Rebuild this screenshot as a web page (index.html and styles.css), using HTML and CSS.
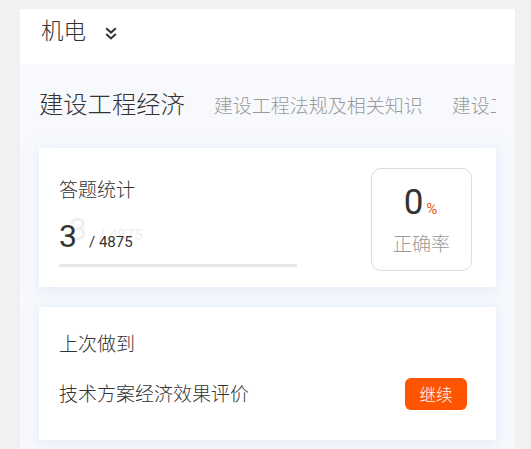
FILE: index.html
```html
<!DOCTYPE html>
<html lang="zh">
<head>
<meta charset="utf-8">
<link rel="stylesheet" href="styles.css">
</head>
<body>
<div class="page">
  <div class="header">
    <span class="major">机电</span>
    <svg class="chev" width="12" height="13" viewBox="0 0 12 13"><polyline points="1.2,1.2 6,5.6 10.8,1.2" fill="none" stroke="#333" stroke-width="2"/><polyline points="1.2,7 6,11.4 10.8,7" fill="none" stroke="#333" stroke-width="2"/></svg>
  </div>
  <div class="main">
    <div class="tabs">
      <span class="tab active">建设工程经济</span>
      <span class="tab">建设工程法规及相关知识</span>
      <span class="tab">建设工程项目管理</span>
    </div>
    <div class="card stats">
      <div class="stats-left">
        <div class="label">答题统计</div>
        <div class="count"><span class="done">3</span><span class="total">/ 4875</span></div>
        <div class="bar"></div>
      </div>
      <div class="rate">
        <div class="rate-num"><span class="pct">0</span><span class="sign">%</span></div>
        <div class="rate-label">正确率</div>
      </div>
    </div>
    <div class="card last">
      <div class="label">上次做到</div>
      <div class="last-row">
        <span class="chapter">技术方案经济效果评价</span>
        <button class="btn">继续</button>
      </div>
    </div>
  </div>
</div>
</body>
</html>
```
FILE: styles.css
```css
* { box-sizing: border-box; }
html, body { margin: 0; padding: 0; }
body {
  background: #f1f1f1;
  font-family: Roboto, "Noto Sans CJK SC", sans-serif;
  font-weight: 300;
  color: #333;
  width: 531px;
  height: 449px;
  overflow: hidden;
}
.page {
  margin: 9px 0 0 20px;
  width: 495px;
}
.header {
  height: 55px;
  background: #fff;
  display: flex;
  align-items: center;
  padding: 0 0 12px 21px;
}
.major {
  font-size: 22.5px;
  line-height: 22px;
}
.chev {
  margin-left: 19px;
  margin-top: 6px;
}
.main {
  background: #f7f9fd;
  padding: 0 19px 20px 19px;
}
.tabs {
  display: flex;
  align-items: baseline;
  gap: 29px;
  white-space: nowrap;
  overflow: hidden;
  padding: 29px 0 29px 0;
}
.tab {
  font-size: 19px;
  line-height: 24px;
  color: #999;
  flex: none;
}
.tab.active {
  font-size: 24.3px;
  color: #333;
}
.card {
  background: #fff;
  box-shadow: 0 2px 12px rgba(205, 220, 248, 0.55);
}
.stats {
  height: 139px;
  display: flex;
  align-items: flex-start;
  justify-content: space-between;
  padding: 20px 24px 0 20px;
}
.stats-left {
  width: 238px;
  padding-top: 13px;
}
.label {
  font-size: 19px;
  line-height: 19px;
}
.count {
  margin-top: 20px;
  display: flex;
  align-items: baseline;
  text-shadow: 10px -7px 0 #efefef;
}
.done {
  font-size: 32px;
  line-height: 32px;
  font-weight: 400;
}
.total {
  font-size: 15px;
  margin-left: 12px;
  font-weight: 400;
}
.bar {
  margin-top: 12px;
  height: 3px;
  background: #e6e6e6;
}
.rate {
  width: 101px;
  height: 103px;
  border: 1px solid #ddd;
  border-radius: 10px;
  display: flex;
  flex-direction: column;
  align-items: center;
  padding-top: 16px;
}
.rate-num {
  display: flex;
  align-items: baseline;
  margin-left: -2px;
}
.pct {
  font-size: 35px;
  line-height: 35px;
  font-weight: 400;
}
.sign {
  font-size: 15px;
  font-weight: 400;
  color: #e95a1c;
  margin-left: 3px;
}
.rate-label {
  margin-top: 15px;
  font-size: 19px;
  line-height: 19px;
  color: #9a9a9a;
}
.last {
  margin-top: 20px;
  height: 133px;
  padding: 28px 29px 0 20px;
}
.last-row {
  margin-top: 24px;
  display: flex;
  align-items: center;
  justify-content: space-between;
}
.chapter {
  font-size: 19px;
  line-height: 19px;
}
.btn {
  width: 62px;
  height: 32px;
  border: none;
  border-radius: 6px;
  background: #ff5400;
  color: #fff;
  font-family: Roboto, "Noto Sans CJK SC", sans-serif;
  font-weight: 300;
  font-size: 16.5px;
  padding: 0;
}
```
